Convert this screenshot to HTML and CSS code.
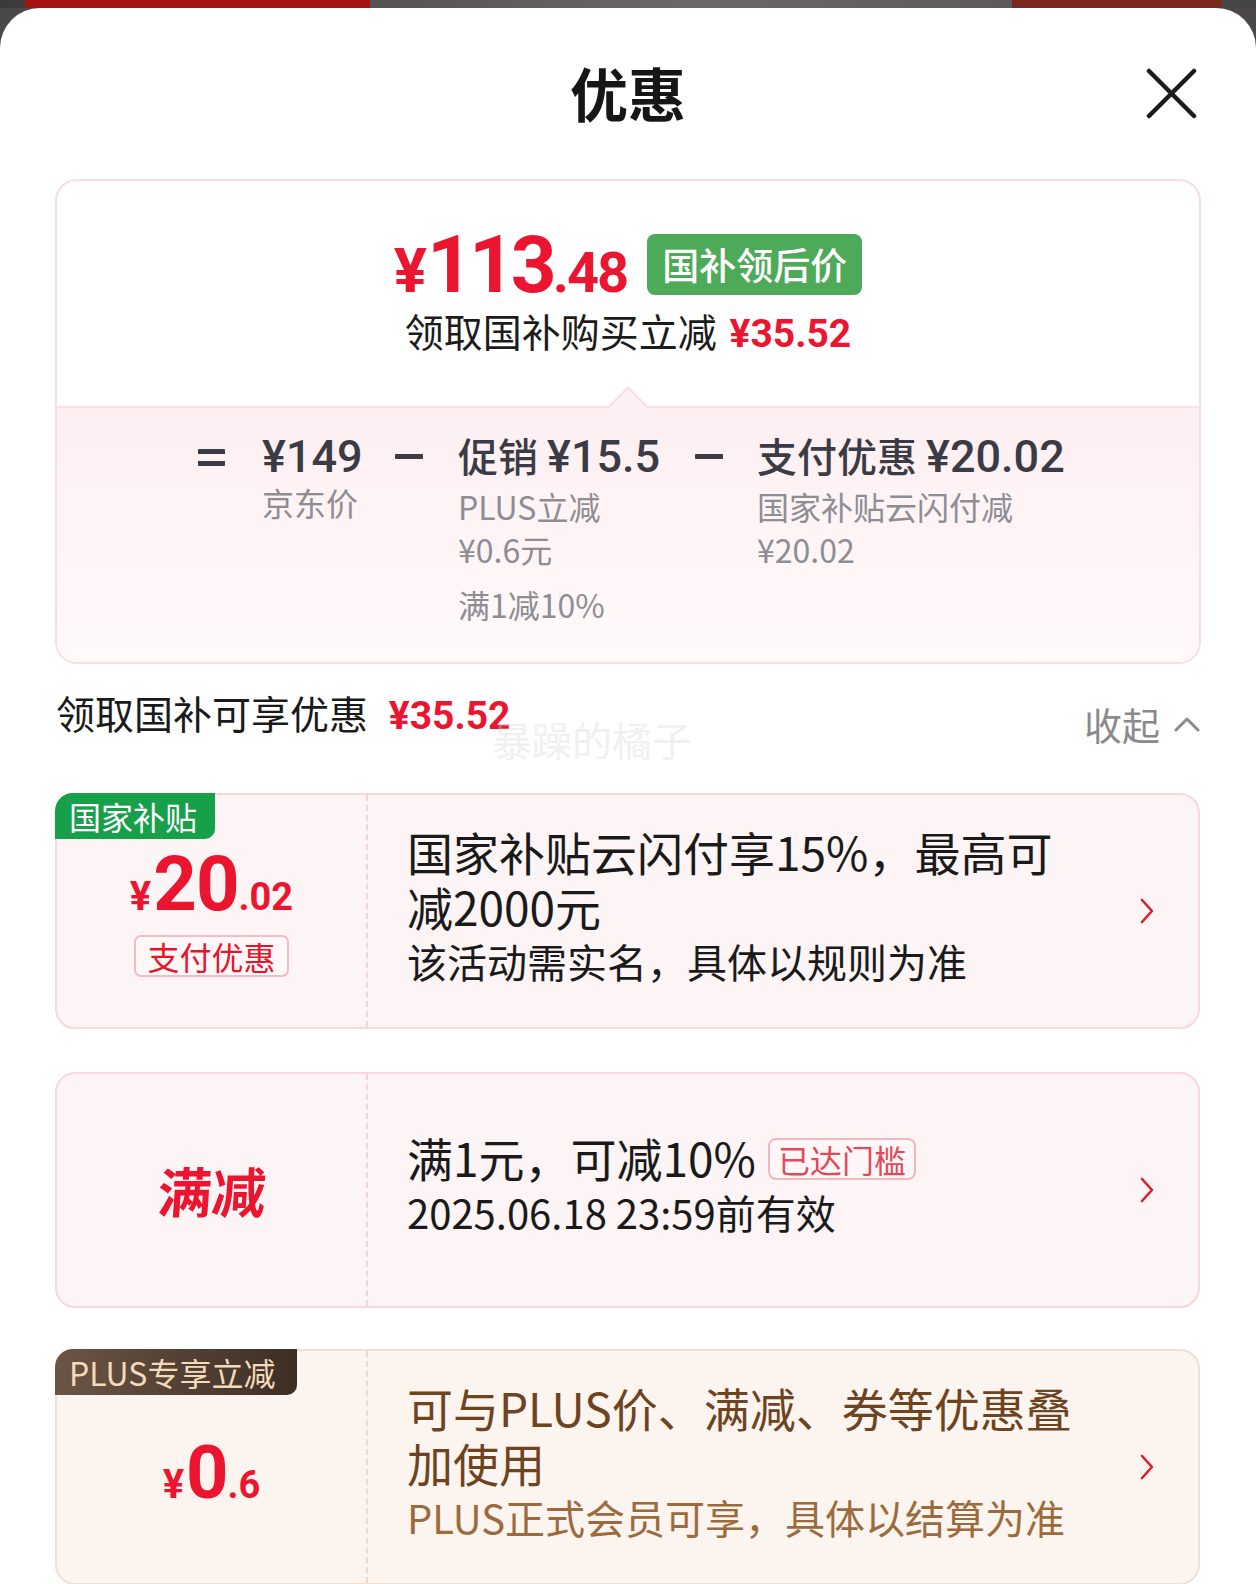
FILE: index.html
```html
<!DOCTYPE html>
<html lang="zh-CN">
<head>
<meta charset="utf-8">
<title>优惠</title>
<link rel="stylesheet" href="styles.css">
</head>
<body>
<div class="backdrop"><span class="banner"></span><span class="banner-r"></span></div>
<div class="sheet">
  <header class="sheet-head">
    <h1 class="sheet-title">优惠</h1>
    <button class="close" aria-label="关闭">
      <svg viewBox="0 0 51 51" width="51" height="51"><path d="M3 3 L48 48 M48 3 L3 48" stroke="#1b1b1b" stroke-width="4.5" stroke-linecap="round" fill="none"/></svg>
    </button>
  </header>

  <section class="summary">
    <div class="summary-top">
      <div class="final">
        <span class="final-price"><span class="cur">¥</span><span class="int">113</span><span class="dec">.48</span></span>
        <span class="final-tag">国补领后价</span>
      </div>
      <div class="final-sub">领取国补购买立减 <em>¥35.52</em></div>
      <span class="notch"></span>
    </div>
    <div class="breakdown">
      <div class="sign"><span class="eq"></span></div>
      <div class="col col1">
        <div class="main"><span class="num">¥149</span></div>
        <div class="sub">京东价</div>
      </div>
      <div class="sign"><span class="minus"></span></div>
      <div class="col col2">
        <div class="main">促销 <span class="num">¥15.5</span></div>
        <div class="sub">PLUS立减<br>¥0.6元</div>
        <div class="sub gap">满1减10%</div>
      </div>
      <div class="sign"><span class="minus"></span></div>
      <div class="col col3">
        <div class="main">支付优惠 <span class="num">¥20.02</span></div>
        <div class="sub">国家补贴云闪付减<br>¥20.02</div>
      </div>
    </div>
  </section>

  <div class="section-head">
    <div class="section-title">领取国补可享优惠 <em>¥35.52</em></div>
    <div class="toggle">收起
      <svg viewBox="0 0 26 15" width="26" height="15"><polyline points="2,13 13,2 24,13" fill="none" stroke="#8a8a8a" stroke-width="3" stroke-linecap="round" stroke-linejoin="round"/></svg>
    </div>
    <span class="watermark">暴躁的橘子</span>
  </div>

  <div class="coupon">
    <span class="coupon-tag tag-green">国家补贴</span>
    <div class="coupon-left">
      <div class="amount"><span class="cur">¥</span><span class="int">20</span><span class="dec">.02</span></div>
      <span class="pay-badge">支付优惠</span>
    </div>
    <div class="coupon-right">
      <div class="coupon-text">
        <div class="coupon-title">国家补贴云闪付享15%，最高可减2000元</div>
        <div class="coupon-desc">该活动需实名，具体以规则为准</div>
      </div>
      <svg class="arrow" viewBox="0 0 14 26" width="14" height="26"><polyline points="2,2 12,13 2,24" fill="none" stroke="#d8202e" stroke-width="2.6" stroke-linecap="round" stroke-linejoin="round"/></svg>
    </div>
  </div>

  <div class="coupon coupon-mid">
    <div class="coupon-left">
      <div class="full-cut">满减</div>
    </div>
    <div class="coupon-right">
      <div class="coupon-text">
        <div class="coupon-title">满1元，可减10%<span class="reach">已达门槛</span></div>
        <div class="coupon-desc">2025.06.18 23:59前有效</div>
      </div>
      <svg class="arrow" viewBox="0 0 14 26" width="14" height="26"><polyline points="2,2 12,13 2,24" fill="none" stroke="#d8202e" stroke-width="2.6" stroke-linecap="round" stroke-linejoin="round"/></svg>
    </div>
  </div>

  <div class="coupon coupon-plus">
    <span class="coupon-tag tag-plus">PLUS专享立减</span>
    <div class="coupon-left">
      <div class="amount"><span class="cur">¥</span><span class="int">0</span><span class="dec">.6</span></div>
    </div>
    <div class="coupon-right">
      <div class="coupon-text">
        <div class="coupon-title">可与PLUS价、满减、券等优惠叠加使用</div>
        <div class="coupon-desc">PLUS正式会员可享，具体以结算为准</div>
      </div>
      <svg class="arrow" viewBox="0 0 14 26" width="14" height="26"><polyline points="2,2 12,13 2,24" fill="none" stroke="#d8202e" stroke-width="2.6" stroke-linecap="round" stroke-linejoin="round"/></svg>
    </div>
  </div>
</div>
</body>
</html>
```
FILE: styles.css
```css
* { box-sizing: border-box; margin: 0; padding: 0; }
html, body { background: #4a4848; }
body {
  width: 1256px;
  height: 1584px;
  overflow: hidden;
  font-family: "Noto Sans CJK SC", "Noto Sans", sans-serif;
  color: #1a1a1a;
}

.backdrop {
  position: relative;
  height: 8px;
  background: linear-gradient(90deg, #3c3a3a 0%, #6a6868 55%, #5c5a5a 80%, #444 100%);
}
.backdrop .banner {
  position: absolute; left: 25px; top: 0; width: 345px; height: 8px;
  background: #a3140f;
}
.backdrop .banner-r {
  position: absolute; left: 1012px; top: 0; width: 210px; height: 8px;
  background: #7a2a1c;
}

.sheet {
  position: relative;
  height: 1576px;
  background: #fff;
  border-radius: 40px 40px 0 0;
  overflow: hidden;
}

/* header */
.sheet-head {
  position: relative;
  height: 171px;
  display: flex;
  align-items: center;
  justify-content: center;
}
.sheet-title {
  font-size: 58px;
  font-weight: 700;
  line-height: 1;
  color: #161616;
  margin-top: -4px;
}
.close {
  position: absolute;
  right: 59px;
  top: 60px;
  width: 51px;
  height: 51px;
  border: 0;
  background: none;
}
.close svg { display: block; }

/* summary card */
.summary {
  margin: 0 55px;
  border: 2px solid #f8dce2;
  border-radius: 22px;
  overflow: hidden;
}
.summary-top {
  position: relative;
  padding: 52px 0 47px;
  display: flex;
  flex-direction: column;
  align-items: center;
}
.final {
  display: flex;
  align-items: center;
  height: 63px;
}
.final-price {
  font-family: Roboto, "Noto Sans", sans-serif;
  font-weight: 700;
  color: #ec1530;
  line-height: 1;
  white-space: nowrap;
  letter-spacing: -2px;
}
.final-price .cur { font-size: 62px; margin-right: 2px; }
.final-price .int { font-size: 80px; letter-spacing: -4px; }
.final-price .dec { font-size: 56px; }
.final-tag {
  margin-left: 20px;
  height: 61px;
  padding: 0 15px;
  line-height: 61px;
  border-radius: 8px;
  background: #4daa58;
  color: #fff;
  font-size: 37px;
  font-weight: 500;
}
.final-sub {
  margin-top: 9px;
  font-size: 39px;
  line-height: 50px;
  color: #1c1c1c;
}
.final-sub em {
  font-style: normal;
  font-family: Roboto, "Noto Sans", sans-serif;
  font-weight: 700;
  font-size: 39px;
  color: #ec1530;
  margin-left: 4px;
}
.notch {
  position: absolute;
  left: 50%;
  bottom: -14px;
  width: 28px;
  height: 28px;
  margin-left: -14px;
  transform: rotate(45deg);
  background: #fdf0f2;
  border-left: 2px solid #f9dde3;
  border-top: 2px solid #f9dde3;
  z-index: 2;
}

.breakdown {
  display: flex;
  padding: 19px 0 36px 141px;
  background: linear-gradient(180deg, #fdeff2 0%, #fff9fa 100%);
  border-top: 2px solid #f9e1e6;
  color: #3b3b45;
}
.sign {
  width: 64px;
  height: 56px;
  display: flex;
  align-items: center;
}
.sign:nth-child(3) { width: 63px; }
.sign:nth-child(5) { width: 62px; }
.eq, .minus {
  display: block;
  width: 27px;
  height: 5px;
  background: #3b3b45;
  border-radius: 1px;
}
.eq {
  height: 17px;
  background: linear-gradient(#3b3b45 0 5px, transparent 5px 12px, #3b3b45 12px 17px);
  margin-top: 4px;
}
.minus { margin-top: 2px; width: 28px; }
.col1 { width: 133px; }
.col2 { width: 237px; }
.main {
  font-size: 40px;
  line-height: 56px;
  font-weight: 500;
  white-space: nowrap;
}
.main .num {
  font-family: Roboto, "Noto Sans", sans-serif;
  font-size: 45px;
  font-weight: 500;
}
.sub {
  font-size: 32px;
  line-height: 43px;
  color: #8d8d93;
  white-space: nowrap;
}
.col1 .sub { margin-top: -4px; }
.sub.gap { margin-top: 12px; }

/* section head */
.section-head {
  position: relative;
  display: flex;
  justify-content: space-between;
  height: 62px;
  margin: 23px 56px 44px;
}
.section-title {
  font-size: 39px;
  line-height: 50px;
  color: #1a1a1a;
}
.section-title em {
  font-style: normal;
  font-family: Roboto, "Noto Sans", sans-serif;
  font-weight: 700;
  color: #ec1530;
  margin-left: 12px;
}
.toggle {
  display: flex;
  align-items: center;
  gap: 14px;
  margin-top: 12px;
  height: 50px;
  font-size: 38px;
  line-height: 50px;
  color: #8a8a8a;
}
.watermark {
  position: absolute;
  left: 436px;
  top: 27px;
  font-size: 40px;
  line-height: 50px;
  color: rgba(215, 215, 215, 0.4);
  pointer-events: none;
}

/* coupons */
.coupon {
  position: relative;
  display: flex;
  height: 236px;
  margin: 0 56px 43px 55px;
  border: 2px solid #f7d8de;
  border-radius: 20px;
  background: #fdf4f5;
}
.coupon-mid { margin-bottom: 41px; }
.coupon-left {
  width: 311px;
  flex: none;
  border-right: 2px dashed #f2d3d9;
  display: flex;
  flex-direction: column;
  align-items: center;
  justify-content: center;
}
.coupon-tag {
  position: absolute;
  left: -2px;
  top: -2px;
  height: 46px;
  padding: 0 14px;
  line-height: 46px;
  font-size: 32px;
  border-radius: 18px 0 10px 0;
  white-space: nowrap;
}
.tag-green {
  width: 160px;
  background: #17a04a;
  color: #fff;
}
.tag-plus {
  width: 242px;
  background: linear-gradient(90deg, #6b5545 0%, #3d2e25 100%);
  color: #f2dabb;
}
.amount {
  display: flex;
  align-items: baseline;
  height: 62px;
  font-family: Roboto, "Noto Sans", sans-serif;
  font-weight: 700;
  color: #ec1530;
  white-space: nowrap;
}
.amount span { line-height: 1; }
.amount .cur { font-size: 40px; margin-right: 2px; }
.amount .int { font-size: 76px; letter-spacing: -1px; }
.amount .dec { font-size: 38px; }
.pay-badge {
  margin-top: 27px;
  height: 42px;
  padding: 0 11px;
  line-height: 38px;
  font-size: 32px;
  color: #e8142d;
  border: 2px solid #f3bcc4;
  border-radius: 7px;
  background: #fff7f8;
}
.full-cut {
  font-size: 54px;
  font-weight: 700;
  line-height: 1;
  color: #ec1530;
  transform: skewX(-4deg);
}
.coupon-right {
  flex: 1;
  display: flex;
  align-items: center;
  padding: 0 44px 10px 39px;
}
.coupon-text {
  width: 670px;
}
.coupon-title {
  font-size: 46px;
  line-height: 55px;
  color: #1a1a1a;
}
.coupon-desc {
  font-size: 40px;
  line-height: 55px;
  color: #1a1a1a;
}
.reach {
  display: inline-block;
  vertical-align: 4px;
  margin-left: 12px;
  height: 42px;
  padding: 0 8px;
  line-height: 38px;
  font-size: 32px;
  color: #e24a5b;
  border: 2px solid #f2b8c0;
  border-radius: 8px;
  background: #fff6f7;
}
.arrow {
  margin-left: auto;
  margin-top: 10px;
  flex: none;
  display: block;
}

.coupon-plus {
  background: #fcf4ee;
  border-color: #f1e0d1;
}
.coupon-plus .coupon-left { border-right-color: #eddac9; }
.coupon-plus .amount .int { font-size: 74px; }
.coupon-plus .coupon-title { color: #6e431f; }
.coupon-plus .coupon-desc { color: #9c6b3d; }
```
